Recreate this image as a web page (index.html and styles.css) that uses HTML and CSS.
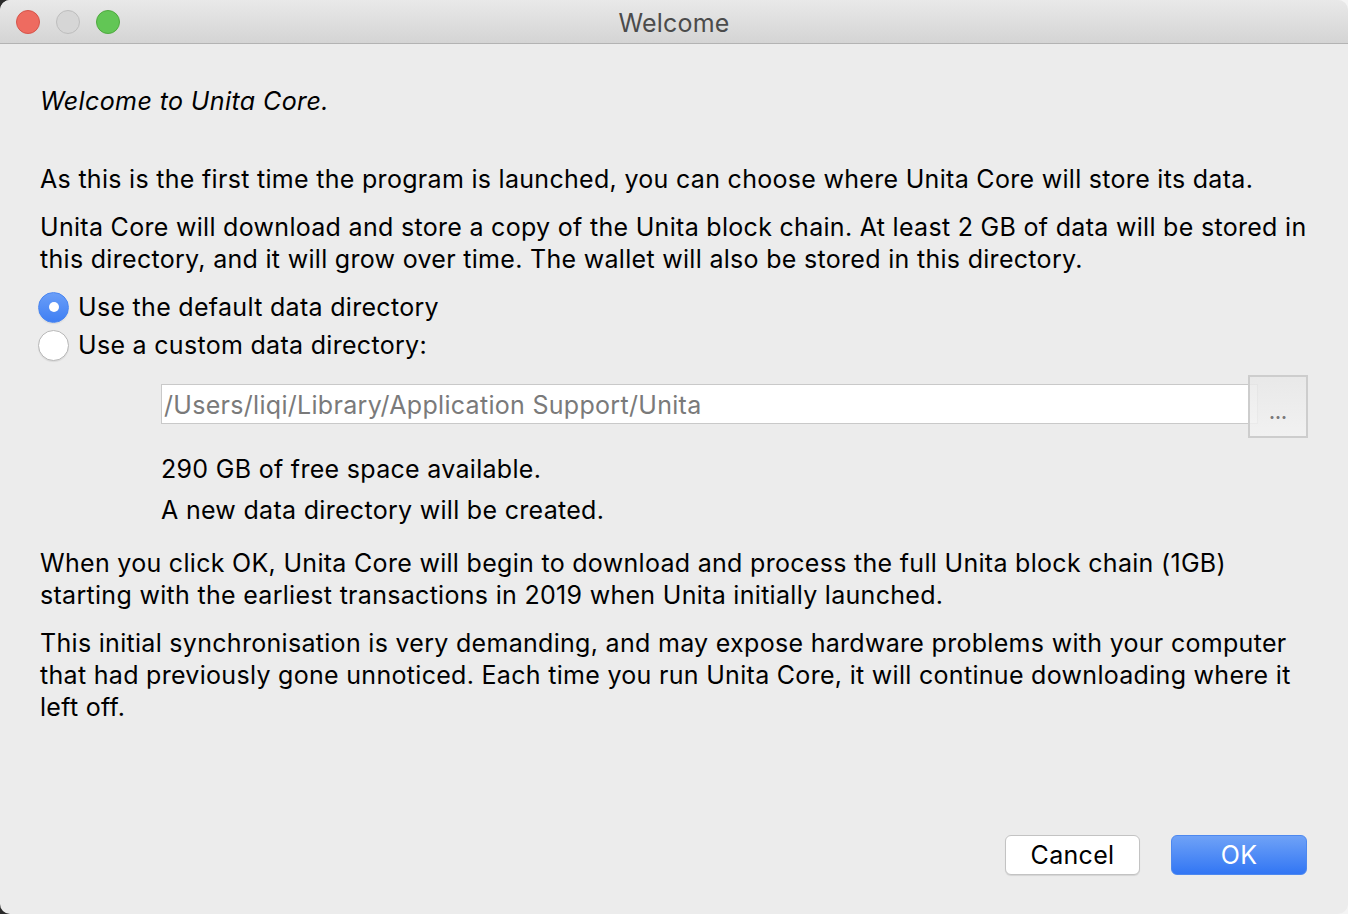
FILE: index.html
```html
<!DOCTYPE html>
<html>
<head>
<meta charset="utf-8">
<title>Welcome</title>
<link rel="stylesheet" href="styles.css">
</head>
<body>
<div class="window">
  <div class="titlebar">
    <div class="lights">
      <span class="light red"></span>
      <span class="light grey"></span>
      <span class="light green"></span>
    </div>
    <div class="title">Welcome</div>
  </div>
  <div class="content">
    <p class="welcome">Welcome to Unita Core.</p>
    <p class="p1">As this is the first time the program is launched, you can choose where Unita Core will store its data.</p>
    <p class="p2">Unita Core will download and store a copy of the Unita block chain. At least 2 GB of data will be stored in this directory, and it will grow over time. The wallet will also be stored in this directory.</p>
    <div class="radios">
      <label class="radio"><span class="dot checked"></span>Use the default data directory</label>
      <label class="radio"><span class="dot"></span>Use a custom data directory:</label>
    </div>
    <div class="custom">
      <div class="pathrow">
        <div class="path">/Users/liqi/Library/Application Support/Unita</div>
        <div class="browse"><span class="dots">...</span></div>
      </div>
      <p class="free">290 GB of free space available.</p>
      <p class="newdir">A new data directory will be created.</p>
    </div>
    <p class="p3">When you click OK, Unita Core will begin to download and process the full Unita block chain (1GB) starting with the earliest transactions in 2019 when Unita initially launched.</p>
    <p class="p4">This initial synchronisation is very demanding, and may expose hardware problems with your computer that had previously gone unnoticed. Each time you run Unita Core, it will continue downloading where it left off.</p>
    <div class="spacer"></div>
    <div class="buttons">
      <button class="btn cancel">Cancel</button>
      <button class="btn ok">OK</button>
    </div>
  </div>
</div>
</body>
</html>
```

FILE: styles.css
```css
html, body {
  margin: 0;
  padding: 0;
  width: 1348px;
  height: 914px;
  overflow: hidden;
  background: linear-gradient(to right, #2a2a2a 0 20px, #f4f4f4 20px);
}
.window {
  width: 1348px;
  height: 914px;
  background: #ececec;
  border-radius: 10px;
  overflow: hidden;
  display: flex;
  flex-direction: column;
  font-family: Inter, "Noto Sans", sans-serif;
  color: #000;
}
.titlebar {
  height: 43px;
  flex: none;
  background: linear-gradient(#e9e9e9, #d4d4d4);
  border-bottom: 1px solid #b3b3b3;
  position: relative;
  display: flex;
  align-items: center;
  justify-content: center;
}
.lights {
  position: absolute;
  left: 16px;
  top: 10px;
  display: flex;
  gap: 16px;
}
.light {
  width: 22px;
  height: 22px;
  border-radius: 50%;
  border: 1px solid;
}
.red { background: #ee6b60; border-color: #d5544a; }
.grey { background: #d6d6d6; border-color: #bdbdbd; }
.green { background: #62c655; border-color: #4fa93f; }
.title {
  font-size: 25px;
  color: #4b4b4b;
  letter-spacing: 0.2px;
  margin-top: 3px;
}
.content {
  flex: 1;
  display: flex;
  flex-direction: column;
  padding: 0 34px 39px 40px;
  font-size: 25px;
  letter-spacing: 0.3px;
  line-height: 32px;
}
.content p { margin: 0; }
.welcome {
  font-style: italic;
  margin-top: 41px !important;
  letter-spacing: 0.4px;
}
.p1 { margin-top: 46px !important; }
.p2 { margin-top: 16px !important; }
.radios {
  margin-top: 16px;
  display: flex;
  flex-direction: column;
  gap: 6px;
}
.radio {
  display: flex;
  align-items: center;
  gap: 9px;
  margin-left: -2px;
  height: 32px;
}
.dot {
  width: 31px;
  height: 31px;
  border-radius: 50%;
  box-sizing: border-box;
  border: 1px solid #b8b8b8;
  background: #fff;
  display: flex;
  align-items: center;
  justify-content: center;
  box-shadow: 0 1px 1px rgba(0,0,0,0.08);
}
.dot.checked {
  background: linear-gradient(#6a9ef8, #3f7ff3);
  border-color: #4a86f0;
}
.dot.checked::after {
  content: "";
  width: 10px;
  height: 10px;
  border-radius: 50%;
  background: #fff;
}
.custom {
  margin-left: 121px;
  margin-top: 14px;
  display: flex;
  flex-direction: column;
  width: 1147px;
}
.pathrow {
  display: flex;
  align-items: flex-start;
  height: 63px;
}
.path {
  width: 1097px;
  flex: none;
  box-sizing: border-box;
  height: 40px;
  margin-top: 9px;
  border: 1px solid #c9c9c9;
  background: #fff;
  color: #7a7a7a;
  padding-left: 2px;
  line-height: 41px;
  margin-right: -10px;
  white-space: nowrap;
}
.browse {
  position: relative;
  flex: none;
  width: 60px;
  height: 63px;
  box-sizing: border-box;
  border: 2px solid #cdcdcd;
  background: linear-gradient(rgba(232,232,232,0.85), rgba(242,242,242,0.85));
  display: flex;
  justify-content: center;
  align-items: flex-end;
}
.dots {
  font-size: 18px;
  color: #7a7a7a;
  font-weight: 700;
  line-height: 18px;
  margin-bottom: 14px;
  letter-spacing: 0;
}
.free { margin-top: 15px !important; }
.newdir { margin-top: 9px !important; }
.p3 { margin-top: 21px !important; }
.p4 { margin-top: 16px !important; }
.spacer { flex: 1; }
.buttons {
  display: flex;
  justify-content: flex-end;
  gap: 31px;
  padding-right: 7px;
}
.btn {
  font-family: Inter, "Noto Sans", sans-serif;
  font-size: 25px;
  letter-spacing: 0.3px;
  height: 40px;
  border-radius: 6px;
  padding: 0;
}
.cancel {
  width: 135px;
  background: #fff;
  color: #000;
  border: 1px solid #c3c3c3;
  box-shadow: 0 1px 1px rgba(0,0,0,0.1);
}
.ok {
  width: 136px;
  background: linear-gradient(#6fa2f7, #3276f4);
  color: #fff;
  border: 1px solid #4d88ef;
}
```
